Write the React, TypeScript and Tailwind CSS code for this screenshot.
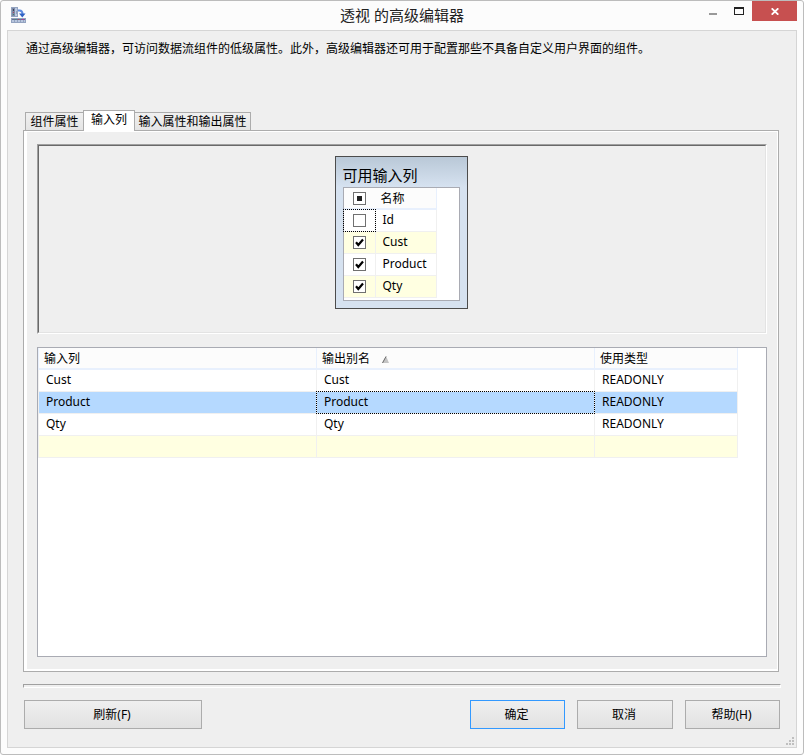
import type { ReactNode } from "react";

const columns = [
  { name: "Id", used: false },
  { name: "Cust", used: true },
  { name: "Product", used: true },
  { name: "Qty", used: true },
];

const mappings = [
  { input: "Cust", alias: "Cust", usage: "READONLY" },
  { input: "Product", alias: "Product", usage: "READONLY" },
  { input: "Qty", alias: "Qty", usage: "READONLY" },
];

function AppIcon() {
  return (
    <svg width="16" height="16" viewBox="0 0 16 16" shapeRendering="crispEdges" aria-hidden="true">
      <rect x="0" y="0" width="7" height="10" fill="#93a3c0" />
      <rect x="1" y="1" width="3" height="8" fill="#7d8aa6" />
      <rect x="4" y="1" width="2" height="8" fill="#b9c8e2" />
      <rect x="2" y="2" width="1" height="2" fill="#3c4158" />
      <rect x="2" y="5" width="1" height="1" fill="#a8455c" />
      <rect x="2" y="7" width="1" height="1" fill="#3f7d68" />
      <rect x="5" y="4" width="1" height="3" fill="#8f9fbd" />
      <g shapeRendering="auto">
        <path d="M7 3.5h1.5q3 0 3 3.5" fill="none" stroke="#5d8be0" strokeWidth="2" />
        <path d="M8 6.5h6.5L11.3 10.500z" fill="#2f62c4" />
      </g>
      <rect x="0" y="11" width="15" height="5" fill="#93a3c0" />
      <rect x="1" y="12" width="13" height="1" fill="#6a7190" />
      <rect x="1" y="13" width="13" height="2" fill="#b9c6de" />
      <rect x="4" y="12" width="1" height="1" fill="#3f9a78" />
      <rect x="7" y="12" width="1" height="1" fill="#b04a5c" />
      <rect x="11" y="12" width="2" height="1" fill="#b03a9a" />
      <rect x="3" y="13" width="1" height="2" fill="#93a3c0" />
      <rect x="6" y="13" width="1" height="2" fill="#93a3c0" />
      <rect x="9" y="13" width="1" height="2" fill="#93a3c0" />
      <rect x="12" y="13" width="1" height="2" fill="#93a3c0" />
    </svg>
  );
}

function TickBox({ label, checked = false, partial = false }: { label: string; checked?: boolean; partial?: boolean }) {
  return (
    <label className="mx-auto grid size-[13px] place-items-center">
      <input
        type="checkbox"
        aria-label={label}
        defaultChecked={checked}
        className="peer col-start-1 row-start-1 size-[13px] appearance-none border border-[#707070] bg-white"
      />
      {partial ? (
        <span className="col-start-1 row-start-1 size-[5px] bg-[#212121]" />
      ) : (
        <svg
          viewBox="0 0 9 9"
          className="invisible col-start-1 row-start-1 size-[9px] peer-checked:visible"
          aria-hidden="true"
        >
          <path d="M1 4.200 3.300 7 8 1.500" fill="none" stroke="#000" strokeWidth="2.200" />
        </svg>
      )}
    </label>
  );
}

function FocusRect() {
  return <span className="pointer-events-none absolute -top-px -right-px -bottom-px -left-px border border-dotted border-black" />;
}

function PushButton({ children, width, primary = false }: { children: ReactNode; width: string; primary?: boolean }) {
  return (
    <button
      type="button"
      className={`${width} h-[29px] border bg-linear-to-b from-[#efefef] to-[#e2e2e2] pr-[2px] ${
        primary ? "border-[#3399ff]" : "border-[#acacac]"
      }`}
    >
      {children}
    </button>
  );
}

export default function App() {
  const headCell =
    "h-[22px] border-r border-b-2 border-[#e8f0fd] bg-[#fcfcfc] p-0 pt-[2px] pl-[5px] text-left font-normal first:border-l";
  const bodyCell = "relative h-[22px] border-r border-b border-[#f0f0f0] p-0 pb-[2px] pl-[7px] first:border-l";

  return (
    <div className="flex min-h-screen flex-col rounded-[3px] border border-[#bcbcbc] bg-[#fcfcfc] px-[6px] pb-[6px] font-['Noto_Sans','Noto_Sans_CJK_SC',sans-serif] text-[12px] leading-4 text-black">
      <header className="grid h-[29px] grid-cols-[1fr_auto_1fr]">
        <div className="pt-[6px] pl-1">
          <AppIcon />
        </div>
        <h1 className="pt-1 text-[15px] leading-5 text-[#222]">透视 的高级编辑器</h1>
        <div className="flex justify-end">
          <button type="button" aria-label="最小化" className="flex h-5 w-[26px] justify-center pt-3">
            <span className="h-[2px] w-2 bg-[#999]" />
          </button>
          <button type="button" aria-label="最大化" className="flex h-5 w-[26px] justify-center pt-[6px]">
            <span className="h-2 w-[10px] border border-t-2 border-[#222]" />
          </button>
          <button type="button" aria-label="关闭" className="flex h-5 w-[45px] items-center justify-center bg-[#c75050]">
            <svg width="8" height="7" viewBox="0 0 8 7" aria-hidden="true">
              <path d="M.7.3 7.3 6.7M7.3.3.7 6.7" stroke="#fff" strokeWidth="1.8" />
            </svg>
          </button>
        </div>
      </header>

      <main className="relative flex flex-1 flex-col border border-[#d5d5d5] bg-[#efefef] px-[15px] pt-2 pb-[18px]">
        <p className="pl-[3px] leading-5">
          通过高级编辑器，可访问数据流组件的低级属性。此外，高级编辑器还可用于配置那些不具备自定义用户界面的组件。
        </p>

        <div role="tablist" className="mt-[51px] flex h-5 items-end pl-[2px]">
          <button type="button" role="tab" aria-selected="false" className="h-[18px] w-[58px] border-t border-l border-[#acacac] bg-linear-to-b from-[#f0f0f0] to-[#e5e5e5]">
            组件属性
          </button>
          <button type="button" role="tab" aria-selected="true" className="z-10 -mb-px h-[21px] w-[52px] border-x border-t border-[#acacac] bg-white pb-[2px]">
            输入列
          </button>
          <button type="button" role="tab" aria-selected="false" className="h-[18px] w-[116px] border-t border-r border-[#acacac] bg-linear-to-b from-[#f0f0f0] to-[#e5e5e5]">
            输入属性和输出属性
          </button>
        </div>

        <section role="tabpanel" aria-label="输入列" className="mr-[2px] flex flex-1 flex-col border border-[#acacac]">
          <div className="flex flex-1 flex-col gap-[13px] border-t border-r border-b-2 border-l-[3px] border-white px-[10px] py-3">
            <div className="border-t border-r border-b border-l border-t-[#a0a0a0] border-r-white border-b-white border-l-[#a0a0a0]">
              <div className="flex h-[188px] justify-center border border-t-[#696969] border-r-[#e3e3e3] border-b-[#e3e3e3] border-l-[#696969] pt-[10px] pr-[2px]">
                <div className="h-[153px] w-[133px] border border-[#4c4c4c] bg-linear-to-b from-[#b9c8d7] to-[#d6e2f0] to-[30px] px-[7px]">
                  <h2 className="pt-2 pb-[2px] text-[15px] leading-5">可用输入列</h2>
                  <div className="h-[114px] border border-[#a9abb3] bg-white">
                    <table className="w-[93px] table-fixed border-separate border-spacing-0">
                      <colgroup>
                        <col className="w-8" />
                        <col />
                      </colgroup>
                      <thead>
                        <tr>
                          <th className="h-[22px] border-r border-b-2 border-b-[#e8f0fd] border-r-[#fcfcfc] bg-[#fcfcfc] p-0">
                            <TickBox label="全选" partial />
                          </th>
                          <th className={headCell}>名称</th>
                        </tr>
                      </thead>
                      <tbody>
                        {columns.map((column, i) => (
                          <tr key={column.name} className={i % 2 ? "bg-[#ffffe1]" : "bg-white"}>
                            <td className="relative h-[22px] border-r border-b border-[#f0f0f0] p-0 pl-px">
                              <TickBox label={column.name} checked={column.used} />
                              {i === 0 && <FocusRect />}
                            </td>
                            <td className={bodyCell}>{column.name}</td>
                          </tr>
                        ))}
                      </tbody>
                    </table>
                  </div>
                </div>
              </div>
            </div>

            <div className="flex-1 border border-[#a9abb3] bg-white">
              <table className="w-[700px] table-fixed border-separate border-spacing-0">
                <colgroup>
                  <col className="w-[279px]" />
                  <col className="w-[278px]" />
                  <col />
                </colgroup>
                <thead>
                  <tr>
                    <th className={headCell}>输入列</th>
                    <th className={headCell}>
                      <span className="flex items-center gap-3">
                        输出别名
                        <svg width="7" height="7" viewBox="0 0 7 7" aria-hidden="true">
                          <path d="M0 7 4 0 7 7z" fill="#c4c4c4" />
                          <path d="M.5 7 4 .5" stroke="#6d6d6d" />
                        </svg>
                      </span>
                    </th>
                    <th className={headCell}>使用类型</th>
                  </tr>
                </thead>
                <tbody>
                  {mappings.map((row, i) => (
                    <tr key={row.input} className={i === 1 ? "bg-[#b5d9ff]" : "bg-white"}>
                      <td className={bodyCell}>{row.input}</td>
                      <td className={bodyCell}>
                        {row.alias}
                        {i === 1 && <FocusRect />}
                      </td>
                      <td className={bodyCell}>{row.usage}</td>
                    </tr>
                  ))}
                  <tr className="bg-[#ffffe1]">
                    <td className={bodyCell} />
                    <td className={bodyCell} />
                    <td className={bodyCell} />
                  </tr>
                </tbody>
              </table>
            </div>
          </div>
        </section>

        <hr className="mt-3 h-1 border border-t-[#a0a0a0] border-r-white border-b-white border-l-[#a0a0a0]" />

        <footer className="mt-3 flex gap-3 pr-px pl-px">
          <PushButton width="w-[178px]">刷新(F)</PushButton>
          <div className="ml-auto flex gap-3">
            <PushButton width="w-[95px]" primary>
              确定
            </PushButton>
            <PushButton width="w-24">取消</PushButton>
            <PushButton width="w-[95px]">帮助(H)</PushButton>
          </div>
        </footer>

        <svg width="8" height="8" viewBox="0 0 8 8" className="absolute right-[2px] bottom-[2px]" fill="#bfbfbf" aria-hidden="true">
          <path d="M6 0h2v2H6zM3 3h2v2H3zM6 3h2v2H6zM0 6h2v2H0zM3 6h2v2H3zM6 6h2v2H6z" />
        </svg>
      </main>
    </div>
  );
}
